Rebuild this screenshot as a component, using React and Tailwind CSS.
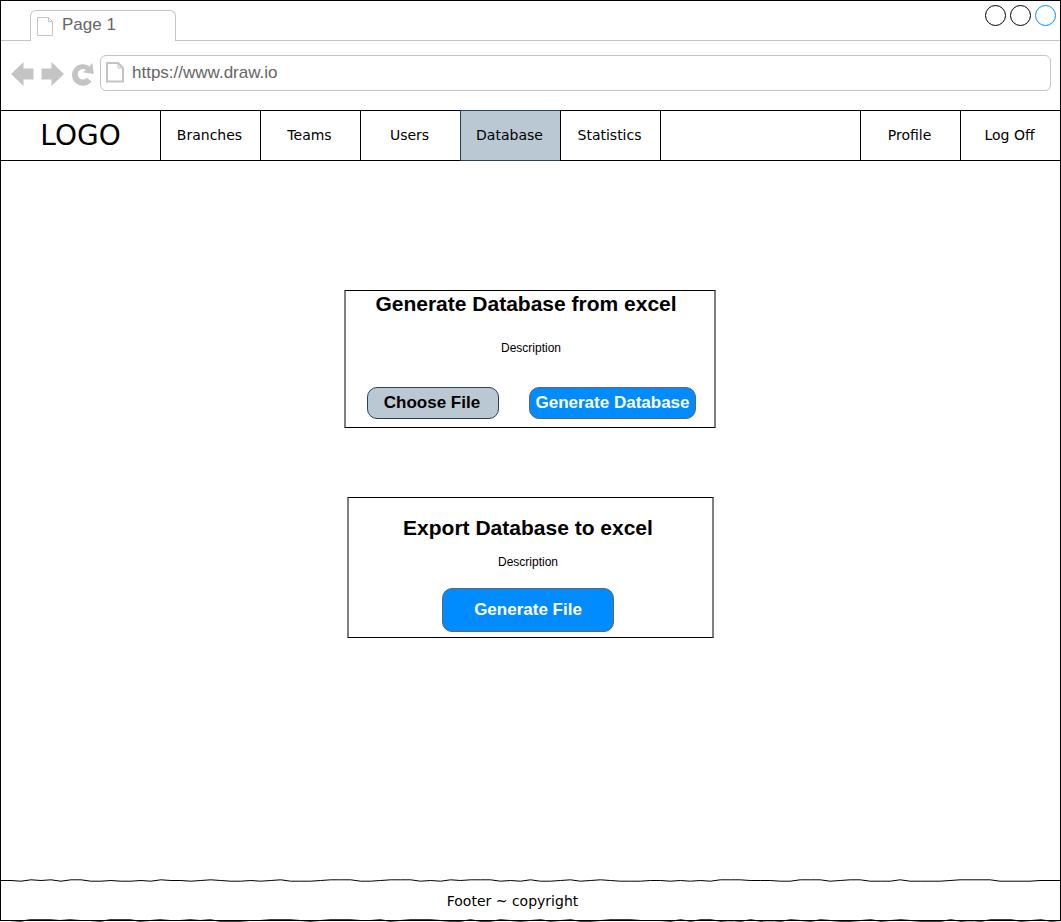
import React from "react";

const links = ["Branches", "Teams", "Users", "Database", "Statistics"];
const accountLinks = ["Profile", "Log Off"];

// Vertical wobble of each 10px segment of the hand-drawn footer rules.
const topWobble = [
  0, 0, 1, -1, 0, -1, 1, -1, -1, 1, 1, 0, 1, 1, 0, 1, -1, 0, 0, 1, 0, -1, 0, 1, 1, 0, 1, 0, -1, 1, 1, 1, 0, -1, -1, -1, 1, 1, 0, -1,
  -1, -1, 1, 0, 1, -1, 0, -1, -1, -1, 1, 0, 1, -1, 1, 1, 0, -1, 1, 0, -1, 0, 1, 1, 1, 0, 0, 1, 0, 1, 0, 1, -1, -1, -1, 0, 0, 0, 1, 1,
  -1, -1, -1, 1, 0, -1, -1, 1, 1, 1, -1, 1, 1, 1, 1, 0, -1, -1, -1, -1, 1, 1, 1, 1, 0, 0, 0,
];
const bottomWobble = [
  0, 0, 1, -1, -1, -1, 0, -1, 0, 0, 1, -1, -1, -1, 1, 0, -1, 0, 0, -1, 0, -1, 1, 1, 1, 0, 0, -1, -1, -1, 0, 1, 0, -1, -1, -1, 0, 0, -1, 1,
  0, -1, -1, -1, 0, 1, 1, -1, 1, 1, -1, 0, 1, 0, -1, 1, 0, -1, 1, 1, 0, -1, -1, -1, 0, 0, 0, 1, -1, 1, -1, -1, 1, 0, 1, -1, 1, 0, 1, -1,
  0, 1, -1, 0, 1, 1, 0, -1, 1, 0, -1, 0, 1, 1, 1, -1, 1, 0, 1, -1, -1, -1, 1, 0, -1, 1, 0,
];

function SketchLine({ wobble }) {
  const points = wobble.map((dy, i) => `${i * 10},${2.5 + dy * 0.7}`).join(" ");
  return (
    <svg className="block h-[5px] w-full" viewBox="0 0 1060 5" preserveAspectRatio="none" aria-hidden="true">
      <polyline points={points} fill="none" stroke="#000" strokeWidth="1" />
    </svg>
  );
}

function TabPageIcon() {
  return (
    <svg width="17" height="19" viewBox="0 0 17 19" fill="none" stroke="#c4c4c4" aria-hidden="true">
      <path d="M.5.5H11.5L15.5 4.5V18.5H.5ZM11.5.5V4.5H15.5" />
    </svg>
  );
}

function AddressPageIcon() {
  return (
    <svg width="18" height="21" viewBox="0 0 18 21" fill="none" stroke="#c4c4c4" strokeWidth="2" aria-hidden="true">
      <path d="M1 1H12L17 6V19.500H1Z" />
      <path d="M12 1V6H17" strokeWidth="1" />
    </svg>
  );
}

function BackIcon() {
  return (
    <svg width="23" height="24" viewBox="0 0 23 24" fill="#c4c4c4" aria-hidden="true">
      <path d="M0 12 12.500 0V6.500H22.500V17.500H12.500V24Z" />
    </svg>
  );
}

function ForwardIcon() {
  return (
    <svg width="23" height="24" viewBox="0 0 23 24" fill="#c4c4c4" aria-hidden="true">
      <path d="M23 12 10.500 0V6.500H.5V17.500H10.500V24Z" />
    </svg>
  );
}

function ReloadIcon() {
  return (
    <svg width="23" height="24" viewBox="0 0 23 24" fill="#c4c4c4" aria-hidden="true">
      <path d="M20.500 19.500A10.800 10.800 0 1 1 18.500 4.500L21.500 1 22.800 12 11.500 10.200 15 8A5.200 5.200 0 1 0 15.800 15.700Z" />
    </svg>
  );
}

function NavItem({ label, active }) {
  return (
    <li
      className={
        active
          ? "flex w-[100px] border-y border-l border-[#23445d] bg-[#bac8d3]"
          : "flex w-[100px] border-y border-l border-black"
      }
    >
      <a href="#" aria-current={active ? "page" : undefined} className="flex flex-1 items-center justify-center pr-0.5 pb-0.5 text-sm">
        {label}
      </a>
    </li>
  );
}

export default function App() {
  return (
    <div className="flex min-h-screen flex-col bg-white font-['Liberation_Sans',Arial,sans-serif] text-black">
      <div className="flex flex-1 flex-col border-x border-t border-black">
        <header>
          <div className="flex h-10">
            <div className="w-[29px] border-b border-[#c4c4c4]" />
            <div className="mt-[9px] flex w-[146px] items-start gap-2 rounded-t-md border-x border-t border-[#c4c4c4] pt-1.5 pl-1.5 text-[17px] leading-4 text-[#666]">
              <TabPageIcon />
              <span>Page 1</span>
            </div>
            <div className="flex flex-1 justify-end gap-1 border-b border-[#c4c4c4] pt-1 pr-1">
              <button aria-label="Minimize" className="size-[21px] rounded-full border border-black" />
              <button aria-label="Maximize" className="size-[21px] rounded-full border border-black" />
              <button aria-label="Close" className="size-[21px] rounded-full border border-[#008cff]" />
            </div>
          </div>

          <div className="flex h-[69px] items-center pr-[9px] pb-1.5 pl-2.5">
            <div className="flex w-[89px] items-center gap-[7px] pt-0.5">
              <button aria-label="Back"><BackIcon /></button>
              <button aria-label="Forward"><ForwardIcon /></button>
              <button aria-label="Reload"><ReloadIcon /></button>
            </div>
            <div className="flex h-9 flex-1 items-center gap-2 rounded-md border border-[#c4c4c4] pl-[5px]">
              <AddressPageIcon />
              <input
                aria-label="Address"
                defaultValue="https://www.draw.io"
                className="min-w-0 flex-1 bg-transparent text-[17px] leading-5 text-[#666] outline-none"
              />
            </div>
          </div>

          <nav className="flex h-[51px] font-['DejaVu_Sans',Verdana,sans-serif]">
            <a href="#" className="flex w-[159px] items-center justify-center border-y border-black text-[28px] leading-8">
              LOGO
            </a>
            <ul className="flex">
              {links.map((label) => (
                <NavItem key={label} label={label} active={label === "Database"} />
              ))}
            </ul>
            <div className="flex-1 border-y border-l border-black" />
            <ul className="flex">
              {accountLinks.map((label) => (
                <NavItem key={label} label={label} />
              ))}
            </ul>
          </nav>
        </header>

        <main className="flex flex-1 flex-col items-center gap-[69px] pt-[129px] pr-px pb-12">
          <section className="w-[372px] border-x-2 border-y border-x-[#808080] border-y-black pb-2 text-center">
            <h2 className="pr-2 text-[21px] leading-[26px] font-bold">Generate Database from excel</h2>
            <p className="pt-[23px] pl-0.5 text-xs leading-4">Description</p>
            <div className="flex justify-between pt-[31px] pr-[18px] pl-[21px]">
              <button className="h-8 w-[132px] rounded-[10px] border border-[#23445d] bg-[#bac8d3] pr-0.5 text-[17px] leading-5 font-bold">
                Choose File
              </button>
              <button className="h-8 w-[167px] rounded-[10px] border border-[#666] bg-[#008cff] text-[17px] leading-5 font-bold whitespace-nowrap text-white">
                Generate Database
              </button>
            </div>
          </section>

          <section className="w-[367px] border-x-2 border-y border-x-[#808080] border-y-black pt-[17px] pr-1 pb-[5px] text-center">
            <h2 className="text-[21px] leading-[26px] font-bold">Export Database to excel</h2>
            <p className="pt-[13px] text-xs leading-4">Description</p>
            <button className="mt-[18px] h-11 w-[172px] rounded-[10px] border border-[#666] bg-[#008cff] text-[17px] leading-5 font-bold text-white">
              Generate File
            </button>
          </section>
        </main>

        <footer className="font-['DejaVu_Sans',Verdana,sans-serif] text-sm">
          <SketchLine wobble={topWobble} />
          <p className="pt-2 pr-9 pb-[9px] text-center leading-5">Footer ~ copyright</p>
        </footer>
      </div>
      <div className="-mt-0.5">
        <div className="flex flex-col">
          <SketchLine wobble={bottomWobble} />
          <div className="-mt-[3px] mb-px h-px bg-black" />
        </div>
      </div>
    </div>
  );
}
